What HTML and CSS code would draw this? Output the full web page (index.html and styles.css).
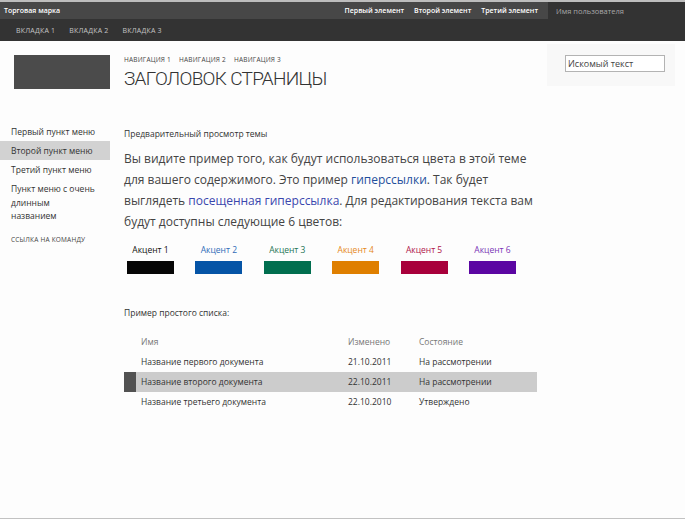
FILE: index.html
```html
<!DOCTYPE html>
<html lang="ru">
<head>
<meta charset="utf-8">
<title>Тема</title>
<link rel="stylesheet" href="styles.css">
</head>
<body>
<div class="topbar">
  <div class="brand">Торговая марка</div>
  <nav class="toplinks">
    <a>Первый элемент</a>
    <a>Второй элемент</a>
    <a>Третий элемент</a>
  </nav>
  <div class="user">Имя пользователя</div>
</div>
<div class="tabs">
  <a>ВКЛАДКА 1</a>
  <a>ВКЛАДКА 2</a>
  <a>ВКЛАДКА 3</a>
</div>
<header class="head">
  <div class="logo"></div>
  <div class="titles">
    <div class="crumbs"><span>НАВИГАЦИЯ 1</span><span>НАВИГАЦИЯ 2</span><span>НАВИГАЦИЯ 3</span></div>
    <h1>ЗАГОЛОВОК СТРАНИЦЫ</h1>
  </div>
  <div class="search"><div class="input">Искомый текст</div></div>
</header>
<div class="main">
  <aside class="leftnav">
    <a class="item">Первый пункт меню</a>
    <a class="item active">Второй пункт меню</a>
    <a class="item">Третий пункт меню</a>
    <a class="item long">Пункт меню с очень длинным названием</a>
    <a class="cmd">ССЫЛКА НА КОМАНДУ</a>
  </aside>
  <section class="content">
    <div class="caption">Предварительный просмотр темы</div>
    <p class="lead">Вы видите пример того, как будут использоваться цвета в этой теме для вашего содержимого. Это пример <a class="link">гиперссылки</a>. Так будет выглядеть <a class="visited">посещенная гиперссылка</a>. Для редактирования текста вам будут доступны следующие 6 цветов:</p>
    <div class="accents">
      <div class="accent a1"><span>Акцент 1</span><i></i></div>
      <div class="accent a2"><span>Акцент 2</span><i></i></div>
      <div class="accent a3"><span>Акцент 3</span><i></i></div>
      <div class="accent a4"><span>Акцент 4</span><i></i></div>
      <div class="accent a5"><span>Акцент 5</span><i></i></div>
      <div class="accent a6"><span>Акцент 6</span><i></i></div>
    </div>
    <div class="caption list-cap">Пример простого списка:</div>
    <div class="table">
      <div class="row hdr"><span class="mark"></span><span class="c1">Имя</span><span class="c2">Изменено</span><span class="c3">Состояние</span></div>
      <div class="row"><span class="mark"></span><span class="c1">Название первого документа</span><span class="c2">21.10.2011</span><span class="c3">На рассмотрении</span></div>
      <div class="row sel"><span class="mark"></span><span class="c1">Название второго документа</span><span class="c2">22.10.2011</span><span class="c3">На рассмотрении</span></div>
      <div class="row"><span class="mark"></span><span class="c1">Название третьего документа</span><span class="c2">22.10.2010</span><span class="c3">Утверждено</span></div>
    </div>
  </section>
</div>
<div class="foot"></div>
</body>
</html>
```
FILE: styles.css
```css
* { box-sizing: border-box; }
html, body { margin: 0; padding: 0; }
body {
  width: 685px;
  height: 519px;
  overflow: hidden;
  background: #fdfdfd;
  font-family: "Open Sans", "Noto Sans", sans-serif;
  color: #333;
  display: flex;
  flex-direction: column;
}
a { cursor: pointer; }

.topbar {
  height: 19px;
  border-top: 2px solid #bdbdbd;
  background: #474747;
  display: flex;
  align-items: center;
  font-size: 7px;
  color: #fff;
  font-weight: 600;
}
.brand { padding-left: 4px; flex: 1; }
.toplinks { display: flex; gap: 10px; padding-right: 10px; }
.user {
  width: 137px;
  align-self: stretch;
  background: #333;
  color: #a8a8a8;
  font-weight: 400;
  font-size: 7.5px;
  display: flex;
  align-items: center;
  padding-left: 8px;
}
.tabs {
  height: 22px;
  background: #333;
  display: flex;
  align-items: center;
  gap: 14px;
  padding-left: 16px;
  font-size: 7px;
  color: #c4c4c4;
  letter-spacing: 0.2px;
}

.head {
  display: flex;
  padding: 0 10px 0 14px;
  height: 50px;
}
.logo {
  width: 96px;
  height: 34px;
  margin-top: 14px;
  background: #4b4b4b;
}
.titles { flex: 1; padding-left: 14px; padding-top: 14px; }
.crumbs { display: flex; gap: 8px; font-size: 6.5px; color: #444; letter-spacing: 0.2px; line-height: 10px; }
h1 {
  margin: 2px 0 0;
  font-family: "Roboto", "Open Sans", sans-serif;
  font-size: 19px;
  font-weight: 300;
  color: #333;
  line-height: 24px;
  letter-spacing: -0.7px;
}
.search {
  width: 128px;
  height: 42px;
  margin-top: 3px;
  background: #f8f8f8;
  padding: 11px 0 0 18px;
}
.input {
  width: 100px;
  height: 17px;
  border: 1px solid #b3b3b3;
  background: #fff;
  font-size: 9px;
  line-height: 15px;
  padding-left: 2px;
  color: #444;
}

.main { display: flex; flex: 1; }
.leftnav {
  width: 110px;
  padding-top: 31px;
  display: flex;
  flex-direction: column;
  font-size: 8.5px;
  color: #333;
}
.item { padding: 3px 0 3px 11px; line-height: 13px; }
.item.active { background: #d2d2d2; }
.item.long { padding-right: 14px; line-height: 13.5px; }
.cmd { padding: 9px 0 0 11px; font-size: 6.5px; letter-spacing: 0.2px; color: #444; }

.content { flex: 1; padding-left: 14px; padding-top: 37px; }
.caption { font-size: 8.5px; color: #333; line-height: 12px; }
.lead {
  margin: 7.5px 0 0;
  width: 420px;
  font-size: 12px;
  line-height: 21px;
  color: #444;
}
.link { color: #1f4f9c; }
.visited { color: #3a47ad; }

.accents { display: flex; gap: 21.4px; padding-left: 3px; margin-top: 12.5px; }
.accent { width: 47px; display: flex; flex-direction: column; align-items: center; font-size: 8.5px; }
.accent span { line-height: 12px; }
.accent i { display: block; width: 47px; height: 13px; margin-top: 5px; }
.a1 span { color: #111; } .a1 i { background: #060606; }
.a2 span { color: #2f6cb8; } .a2 i { background: #0554a6; }
.a3 span { color: #1e7556; } .a3 i { background: #016e4f; }
.a4 span { color: #e6891a; } .a4 i { background: #df7f00; }
.a5 span { color: #b0154a; } .a5 i { background: #a8003b; }
.a6 span { color: #7b35b6; } .a6 i { background: #5b06a2; }

.list-cap { margin-top: 33px; }
.table { margin-top: 12.5px; width: 413px; font-size: 8.5px; color: #333; }
.row { display: flex; height: 20px; align-items: center; }
.mark { width: 12px; align-self: stretch; }
.c1 { width: 212px; padding-left: 5px; }
.c2 { width: 71px; }
.c3 { flex: 1; }
.hdr { color: #777; }
.sel { background: #cccccc; }
.sel .mark { background: #525252; }

.foot { height: 1px; background: #c2c2c2; margin-top: auto; }
```
